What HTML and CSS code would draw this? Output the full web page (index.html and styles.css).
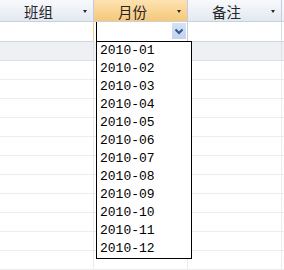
FILE: index.html
```html
<!DOCTYPE html>
<html>
<head>
<meta charset="utf-8">
<link rel="stylesheet" href="styles.css">
</head>
<body>
<div class="sheet">
  <div class="row head">
    <div class="cell h"><span class="label">班组</span><span class="tri"></span></div>
    <div class="cell h active"><span class="label">月份</span><span class="tri"></span></div>
    <div class="cell h"><span class="label">备注</span><span class="tri"></span></div>
    <div class="cell h end"></div>
  </div>
  <div class="row cur">
    <div class="cell mark"></div>
    <div class="cell combo-cell">
      <div class="combo">
        <div class="btn"><svg width="14" height="16" viewBox="0 0 14 16"><path d="M3.5 6.5 L7 10 L10.5 6.5" fill="none" stroke="#34558f" stroke-width="2"/></svg></div>
      </div>
    </div>
    <div class="cell"></div>
    <div class="cell end"></div>
  </div>
  <div class="row newrow">
    <div class="cell"></div><div class="cell"></div><div class="cell"></div><div class="cell end"></div>
  </div>
  <div class="row body"><div class="cell"></div><div class="cell"></div><div class="cell"></div><div class="cell end"></div></div>
  <div class="row body"><div class="cell"></div><div class="cell"></div><div class="cell"></div><div class="cell end"></div></div>
  <div class="row body"><div class="cell"></div><div class="cell"></div><div class="cell"></div><div class="cell end"></div></div>
  <div class="row body"><div class="cell"></div><div class="cell"></div><div class="cell"></div><div class="cell end"></div></div>
  <div class="row body"><div class="cell"></div><div class="cell"></div><div class="cell"></div><div class="cell end"></div></div>
  <div class="row body"><div class="cell"></div><div class="cell"></div><div class="cell"></div><div class="cell end"></div></div>
  <div class="row body"><div class="cell"></div><div class="cell"></div><div class="cell"></div><div class="cell end"></div></div>
  <div class="row body"><div class="cell"></div><div class="cell"></div><div class="cell"></div><div class="cell end"></div></div>
  <div class="row body"><div class="cell"></div><div class="cell"></div><div class="cell"></div><div class="cell end"></div></div>
  <div class="row body"><div class="cell"></div><div class="cell"></div><div class="cell"></div><div class="cell end"></div></div>
  <div class="row body"><div class="cell"></div><div class="cell"></div><div class="cell"></div><div class="cell end"></div></div>
  <ul class="list">
    <li>2010-01</li>
    <li>2010-02</li>
    <li>2010-03</li>
    <li>2010-04</li>
    <li>2010-05</li>
    <li>2010-06</li>
    <li>2010-07</li>
    <li>2010-08</li>
    <li>2010-09</li>
    <li>2010-10</li>
    <li>2010-11</li>
    <li>2010-12</li>
  </ul>
</div>
</body>
</html>
```
FILE: styles.css
```css
html, body {
  margin: 0;
  padding: 0;
  background: #ffffff;
  overflow: hidden;
}
.sheet {
  position: relative;
  width: 284px;
  height: 270px;
  overflow: hidden;
  font-family: "Noto Sans CJK SC", "Liberation Sans", sans-serif;
}
.row {
  display: grid;
  grid-template-columns: 94px 94px 94px 1fr;
}
.cell {
  box-sizing: border-box;
  border-right: 1px solid #ececec;
}
.head {
  height: 22px;
}
.head .cell {
  display: flex;
  align-items: center;
  height: 22px;
  padding-top: 2px;
  border-right: 1px solid #c3cedd;
  border-bottom: 1px solid #c8d1de;
  background: linear-gradient(#f7f9fc, #e3e9f1);
  color: #262626;
  font-size: 14.5px;
  line-height: 16px;
}
.head .cell.active {
  background: linear-gradient(#fde2b2, #f6c879);
}
.head .cell.end {
  border-right: none;
  background: linear-gradient(#fafbfd, #eef1f5);
}
.label {
  flex: 1;
  text-align: center;
}
.tri {
  width: 0;
  height: 0;
  margin: 0 6px 0 6px;
  border-left: 2.5px solid transparent;
  border-right: 2.5px solid transparent;
  border-top: 3px solid #2a2a2a;
}
.cur {
  height: 20px;
}
.cur .cell {
  height: 20px;
  border-bottom: 1px solid #cfd6e3;
  border-right-color: #d9dee8;
}
.cur .cell.mark {
  border-right-color: #f5cb87;
}
.cur .cell.combo-cell {
  border-right-color: #c3cedd;
  border-bottom: none;
}
.combo {
  box-sizing: border-box;
  height: 20px;
  margin-left: 2px;
  border-left: 1px solid #000;
  display: flex;
  justify-content: flex-end;
  padding-top: 1px;
}
.btn {
  width: 14px;
  height: 16px;
  margin-right: 1px;
  background: linear-gradient(#d6e2f3, #c2d3ec);
}
.btn svg {
  display: block;
}
.newrow {
  height: 19px;
}
.newrow .cell {
  height: 19px;
  background: #eff0f4;
  border-bottom: 1px solid #d8dde6;
  border-right-color: #dde1e9;
}
.body {
  height: 19px;
}
.body .cell {
  height: 19px;
  border-bottom: 1px solid #ececec;
}
.cell.end {
  border-right: none;
}
.list {
  position: absolute;
  left: 96px;
  top: 41px;
  width: 94px;
  height: 216px;
  margin: 0;
  padding: 0;
  list-style: none;
  border: 1px solid #000;
  background: #fff;
  font-family: "Liberation Mono", "DejaVu Sans Mono", monospace;
  font-size: 13px;
  color: #000;
}
.list li {
  height: 18px;
  line-height: 18px;
  padding-left: 3px;
}
```
